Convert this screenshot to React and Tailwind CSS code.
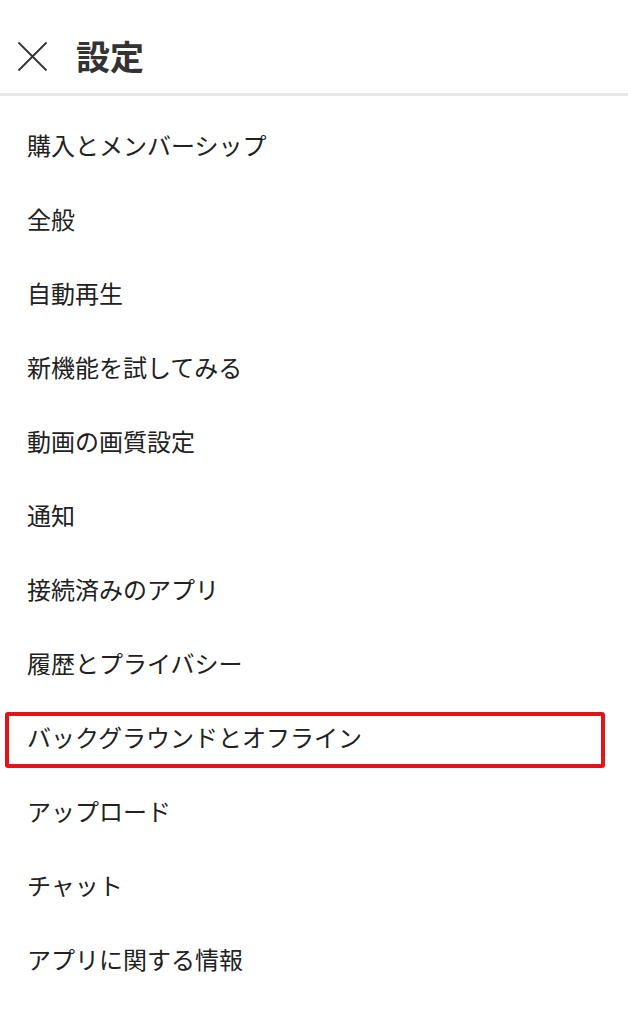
import React from "react";

const items = [
  "購入とメンバーシップ",
  "全般",
  "自動再生",
  "新機能を試してみる",
  "動画の画質設定",
  "通知",
  "接続済みのアプリ",
  "履歴とプライバシー",
  "バックグラウンドとオフライン",
  "アップロード",
  "チャット",
  "アプリに関する情報",
];

export default function App() {
  return (
    <div
      className="w-[628px] h-[1024px] bg-white overflow-hidden text-[#212121]"
      style={{ fontFamily: '"Noto Sans CJK JP", "Noto Sans", sans-serif' }}
    >
      <div className="h-[93px] flex items-center pt-[19px]">
        <svg
          className="ml-[17px]"
          width="31"
          height="31"
          viewBox="0 0 31 31"
          fill="none"
          stroke="#333"
          strokeWidth="1.8"
        >
          <path d="M1.5 1.5L29.5 29.5M29.5 1.5L1.5 29.5" />
        </svg>
        <h1 className="ml-[28px] text-[34px] font-bold leading-none text-[#333]">
          設定
        </h1>
      </div>
      <div className="h-[3px] bg-[#e6e6e6]" />
      <div className="pt-[12px]">
        {items.map((t) => (
          <div key={t} className="relative h-[74px] flex items-center pl-[27px]">
            <span className="text-[24px] leading-none">{t}</span>
            {t === "バックグラウンドとオフライン" && (
              <div className="absolute left-[5px] top-[12px] w-[600px] h-[56px] border-[4px] border-[#e3131a] rounded-[3px]" />
            )}
          </div>
        ))}
      </div>
    </div>
  );
}
